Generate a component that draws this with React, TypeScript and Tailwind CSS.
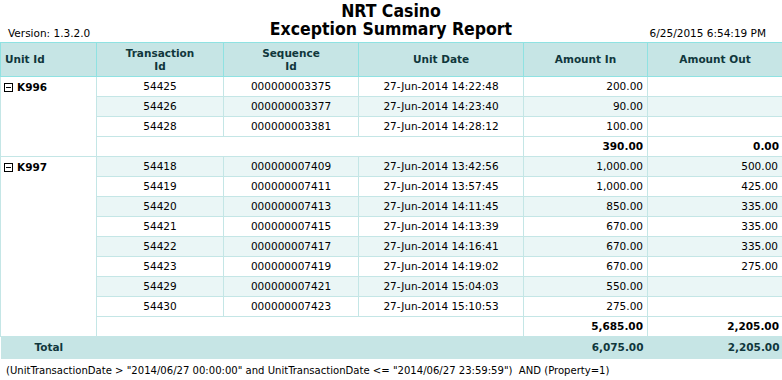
import React from 'react';

type Row = { tx: string; seq: string; date: string; inAmt: string; outAmt: string };

const groups: { unit: string; rows: Row[]; totalIn: string; totalOut: string }[] = [
  {
    unit: 'K996',
    rows: [
      { tx: '54425', seq: '000000003375', date: '27-Jun-2014 14:22:48', inAmt: '200.00', outAmt: '' },
      { tx: '54426', seq: '000000003377', date: '27-Jun-2014 14:23:40', inAmt: '90.00', outAmt: '' },
      { tx: '54428', seq: '000000003381', date: '27-Jun-2014 14:28:12', inAmt: '100.00', outAmt: '' },
    ],
    totalIn: '390.00',
    totalOut: '0.00',
  },
  {
    unit: 'K997',
    rows: [
      { tx: '54418', seq: '000000007409', date: '27-Jun-2014 13:42:56', inAmt: '1,000.00', outAmt: '500.00' },
      { tx: '54419', seq: '000000007411', date: '27-Jun-2014 13:57:45', inAmt: '1,000.00', outAmt: '425.00' },
      { tx: '54420', seq: '000000007413', date: '27-Jun-2014 14:11:45', inAmt: '850.00', outAmt: '335.00' },
      { tx: '54421', seq: '000000007415', date: '27-Jun-2014 14:13:39', inAmt: '670.00', outAmt: '335.00' },
      { tx: '54422', seq: '000000007417', date: '27-Jun-2014 14:16:41', inAmt: '670.00', outAmt: '335.00' },
      { tx: '54423', seq: '000000007419', date: '27-Jun-2014 14:19:02', inAmt: '670.00', outAmt: '275.00' },
      { tx: '54429', seq: '000000007421', date: '27-Jun-2014 15:04:03', inAmt: '550.00', outAmt: '' },
      { tx: '54430', seq: '000000007423', date: '27-Jun-2014 15:10:53', inAmt: '275.00', outAmt: '' },
    ],
    totalIn: '5,685.00',
    totalOut: '2,205.00',
  },
];

const MinusBox = () => (
  <svg width="9" height="9" viewBox="0 0 9 9" className="inline-block mr-[4px] align-[-1px]">
    <rect x="0.5" y="0.5" width="8" height="8" fill="white" stroke="#000" />
    <line x1="2" y1="4.5" x2="7" y2="4.5" stroke="#000" />
  </svg>
);

const condensed = { fontFamily: '"DejaVu Sans Condensed", "DejaVu Sans", sans-serif' };

export default function App() {
  let idx = 0;
  const cell = 'border border-[#c4e6e6] px-[4px] h-[20px] leading-[13px]';
  return (
    <div className="w-[782px] h-[380px] bg-white text-black text-[10.5px] overflow-hidden" style={{ fontFamily: '"DejaVu Sans", sans-serif' }}>
      <div className="relative h-[42px]">
        <div className="text-center font-bold text-[17.5px] leading-[18px] pt-[2px]" style={condensed}>
          <div>NRT Casino</div>
          <div>Exception Summary Report</div>
        </div>
        <div className="absolute left-[8px] top-[26px]">Version: 1.3.2.0</div>
        <div className="absolute right-[16px] top-[26px]">6/25/2015 6:54:19 PM</div>
      </div>
      <table className="table-fixed border-collapse w-[782px]">
        <colgroup>
          <col className="w-[96px]" />
          <col className="w-[127px]" />
          <col className="w-[135px]" />
          <col className="w-[165px]" />
          <col className="w-[124px]" />
          <col className="w-[135px]" />
        </colgroup>
        <thead>
          <tr className="bg-[#c6e5e5] text-[#10373c] font-bold h-[34px]">
            <th className="border border-[#8fe2e2] px-[4px] text-left font-bold leading-[13px]">Unit Id</th>
            <th className="border border-[#8fe2e2] px-[4px] text-center font-bold leading-[13px]">Transaction<br />Id</th>
            <th className="border border-[#8fe2e2] px-[4px] text-center font-bold leading-[13px]">Sequence<br />Id</th>
            <th className="border border-[#8fe2e2] px-[4px] text-center font-bold leading-[13px]">Unit Date</th>
            <th className="border border-[#8fe2e2] px-[4px] text-center font-bold leading-[13px]">Amount In</th>
            <th className="border border-[#8fe2e2] px-[4px] text-center font-bold leading-[13px]">Amount Out</th>
          </tr>
        </thead>
        <tbody>
          {groups.map((g) => (
            <React.Fragment key={g.unit}>
              {g.rows.map((r, i) => {
                const alt = idx++ % 2 === 1;
                return (
                  <tr key={r.tx} className={alt ? 'bg-[#eaf6f6]' : 'bg-white'}>
                    {i === 0 && (
                      <td rowSpan={g.rows.length + 1} className="border border-[#c4e6e6] bg-white align-top pl-[3px] pt-[4px] font-bold leading-[13px]">
                        <MinusBox />
                        {g.unit}
                      </td>
                    )}
                    <td className={`${cell} text-center`}>{r.tx}</td>
                    <td className={`${cell} text-center`}>{r.seq}</td>
                    <td className={`${cell} text-center`}>{r.date}</td>
                    <td className={`${cell} text-right`}>{r.inAmt}</td>
                    <td className={`${cell} text-right`}>{r.outAmt}</td>
                  </tr>
                );
              })}
              <tr className="bg-white font-bold">
                <td colSpan={3} className="border border-[#c4e6e6] border-x-0 h-[20px]"></td>
                <td className={`${cell} text-right`}>{g.totalIn}</td>
                <td className={`${cell} pr-[3px] text-right`}>{g.totalOut}</td>
              </tr>
            </React.Fragment>
          ))}
          <tr className="bg-[#c6e5e5] text-[#10373c] font-bold">
            <td className="h-[22px] pl-[34px] leading-[13px]">Total</td>
            <td></td>
            <td></td>
            <td></td>
            <td className="px-[4px] text-right leading-[13px]">6,075.00</td>
            <td className="pl-[4px] pr-[3px] text-right leading-[13px]">2,205.00</td>
          </tr>
        </tbody>
      </table>
      <div className="pl-[6px] pt-[5px] text-[11.2px] leading-[13px] whitespace-pre" style={condensed}>(UnitTransactionDate &gt; "2014/06/27 00:00:00" and UnitTransactionDate &lt;= "2014/06/27 23:59:59")  AND (Property=1)</div>
    </div>
  );
}
